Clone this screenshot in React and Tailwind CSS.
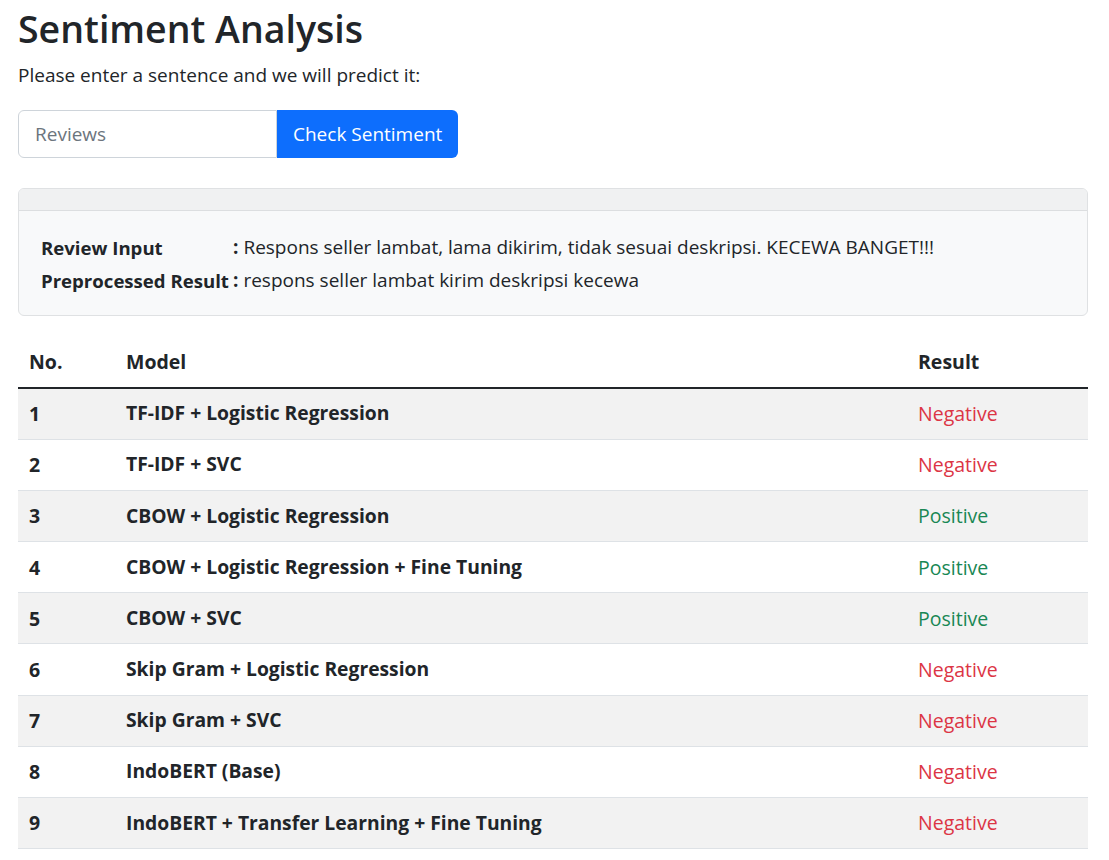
import React from 'react';

const rows = [
  { no: 1, model: 'TF-IDF + Logistic Regression', result: 'Negative' },
  { no: 2, model: 'TF-IDF + SVC', result: 'Negative' },
  { no: 3, model: 'CBOW + Logistic Regression', result: 'Positive' },
  { no: 4, model: 'CBOW + Logistic Regression + Fine Tuning', result: 'Positive' },
  { no: 5, model: 'CBOW + SVC', result: 'Positive' },
  { no: 6, model: 'Skip Gram + Logistic Regression', result: 'Negative' },
  { no: 7, model: 'Skip Gram + SVC', result: 'Negative' },
  { no: 8, model: 'IndoBERT (Base)', result: 'Negative' },
  { no: 9, model: 'IndoBERT + Transfer Learning + Fine Tuning', result: 'Negative' },
];

export default function App() {
  return (
    <div className="min-h-screen bg-white pl-[18px] pr-[21px] text-[#212529]" style={{ fontFamily: '"Open Sans", "Noto Sans", sans-serif' }}>
      <h1 className="pt-[6px] text-[37.5px] font-semibold leading-[1.2]">Sentiment Analysis</h1>
      <p className="mt-[12px] text-[19px] leading-6">Please enter a sentence and we will predict it:</p>

      {/* form */}
      <div className="mt-[23px] flex">
        <input
          className="h-12 w-[259px] rounded-l-md border border-[#ced4da] px-4 text-[19px] text-[#212529] outline-none placeholder:text-[#6c757d]"
          placeholder="Reviews"
        />
        <button className="h-12 rounded-r-md bg-[#0d6efd] px-4 text-[19px] text-white">Check Sentiment</button>
      </div>

      {/* hasil preprocessing */}
      <div className="mt-[30px] overflow-hidden rounded-md border border-[#dfe1e3] bg-[#f8f9fa]">
        <div className="h-[22px] border-b border-[#dcdee0] bg-[#f0f1f2]" />
        <div className="px-[22px] pb-[18px] pt-[20px] text-[19px]">
          <div className="flex h-[33px] items-center">
            <span className="w-[192px] text-[18.6px] font-bold">Review Input</span>
            <span className="font-bold">:</span>
            <span className="ml-[5px]">Respons seller lambat, lama dikirim, tidak sesuai deskripsi. KECEWA BANGET!!!</span>
          </div>
          <div className="flex h-[33px] items-center">
            <span className="w-[192px] text-[18.6px] font-bold">Preprocessed Result</span>
            <span className="font-bold">:</span>
            <span className="ml-[5px]">respons seller lambat kirim deskripsi kecewa</span>
          </div>
        </div>
      </div>

      {/* tabel model */}
      <table className="mt-[21px] w-full border-collapse text-[19.5px]">
        <thead>
          <tr className="h-[51px] border-b-2 border-[#212529] text-left">
            <th className="w-[108px] pl-[11px] font-bold">No.</th>
            <th className="font-bold">Model</th>
            <th className="w-[170px] font-bold">Result</th>
          </tr>
        </thead>
        <tbody>
          {rows.map((r, i) => (
            <tr key={r.no} className={`h-[51.2px] border-b border-[#dee2e6] ${i % 2 === 0 ? 'bg-[#f2f2f2]' : 'bg-white'}`}>
              <td className="pl-[11px] font-bold">{r.no}</td>
              <td className="text-[19.3px] font-bold">{r.model}</td>
              <td className={r.result === 'Negative' ? 'text-[#dc3545]' : 'text-[#198754]'}>{r.result}</td>
            </tr>
          ))}
        </tbody>
      </table>
    </div>
  );
}
